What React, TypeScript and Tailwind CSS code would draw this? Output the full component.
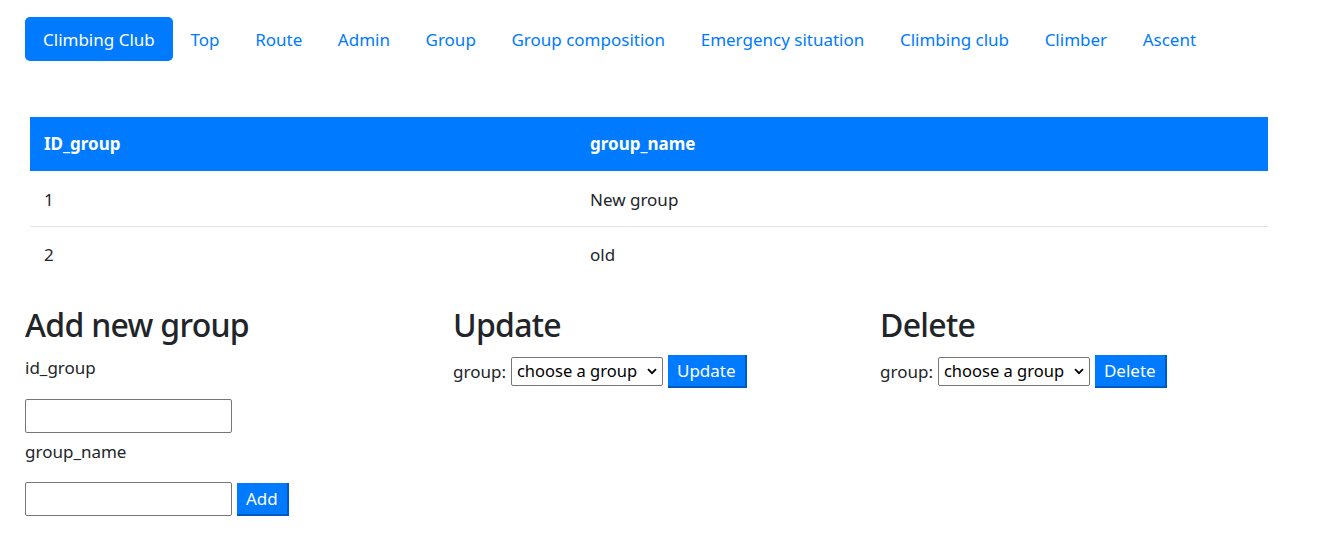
const navLinks = [
  "Top",
  "Route",
  "Admin",
  "Group",
  "Group composition",
  "Emergency situation",
  "Climbing club",
  "Climber",
  "Ascent",
];

const rows = [
  { id: 1, name: "New group" },
  { id: 2, name: "old" },
];

function GroupSelect() {
  return (
    <div className="relative h-[29px] w-[152px] border border-[#767676] rounded-[2px] bg-white flex items-center pl-[5px] text-[16.5px] text-black">
      <span className="leading-none">choose a group</span>
      <svg
        className="absolute right-[5px] top-[10px]"
        width="10"
        height="7"
        viewBox="0 0 10 7"
        fill="none"
      >
        <path d="M1 1.2 5 5.2 9 1.2" stroke="#000" strokeWidth="1.8" />
      </svg>
    </div>
  );
}

function BlueButton({ label }: { label: string }) {
  return (
    <button className="h-[33px] px-[9px] bg-[#007bff] text-white text-[17px] leading-none border-r-2 border-b-2 border-[#0059c0]">
      {label}
    </button>
  );
}

export default function App() {
  return (
    <div className="min-h-[553px] bg-white text-[#212529] font-['Noto_Sans',sans-serif] text-[17px]">
      {/* Nav */}
      <nav className="flex items-center pt-[17px] pl-[25px]">
        <a className="h-[44px] px-[18px] pt-[1px] flex items-center rounded-[5px] bg-[#007bff] text-white">
          Climbing Club
        </a>
        {navLinks.map((l) => (
          <a key={l} className="h-[44px] px-[17.8px] pt-[1px] flex items-center text-[#007bff]">
            {l}
          </a>
        ))}
      </nav>

      {/* Table */}
      <div className="pl-[30px] pt-[56px] w-[1268px]">
        <table className="w-full border-collapse">
          <thead>
            <tr className="bg-[#007bff] text-white h-[54px]">
              <th className="text-left font-bold px-[14px] w-[546px]">ID_group</th>
              <th className="text-left font-bold px-[14px]">group_name</th>
            </tr>
          </thead>
          <tbody>
            {rows.map((r, i) => (
              <tr key={r.id} className={i === 0 ? "h-[55px] border-b border-[#dee2e6]" : "h-[54px]"}>
                <td className="px-[14px] pt-[3px]">{r.id}</td>
                <td className="px-[14px] pt-[3px]">{r.name}</td>
              </tr>
            ))}
          </tbody>
        </table>
      </div>

      {/* Forms */}
      <div className="grid grid-cols-[428px_427px_428px] pl-[25px] pt-[25px]">
        <div>
          <h2 className="text-[32px] leading-[40px] font-medium tracking-[-0.7px]">Add new group</h2>
          <div className="mt-[10px]">id_group</div>
          <input className="mt-[18px] block w-[207px] h-[34px] border border-[#767676] rounded-[2px]" />
          <div className="mt-[6px]">group_name</div>
          <div className="mt-[18px] flex items-center gap-[5px]">
            <input className="w-[207px] h-[34px] border border-[#767676] rounded-[2px]" />
            <BlueButton label="Add" />
          </div>
        </div>
        <div>
          <h2 className="text-[32px] leading-[40px] font-medium tracking-[-0.7px]">Update</h2>
          <div className="mt-[10px] flex items-center gap-[5px]">
            <span>group:</span>
            <GroupSelect />
            <BlueButton label="Update" />
          </div>
        </div>
        <div>
          <h2 className="text-[32px] leading-[40px] font-medium tracking-[-0.7px]">Delete</h2>
          <div className="mt-[10px] flex items-center gap-[5px]">
            <span>group:</span>
            <GroupSelect />
            <BlueButton label="Delete" />
          </div>
        </div>
      </div>
    </div>
  );
}
